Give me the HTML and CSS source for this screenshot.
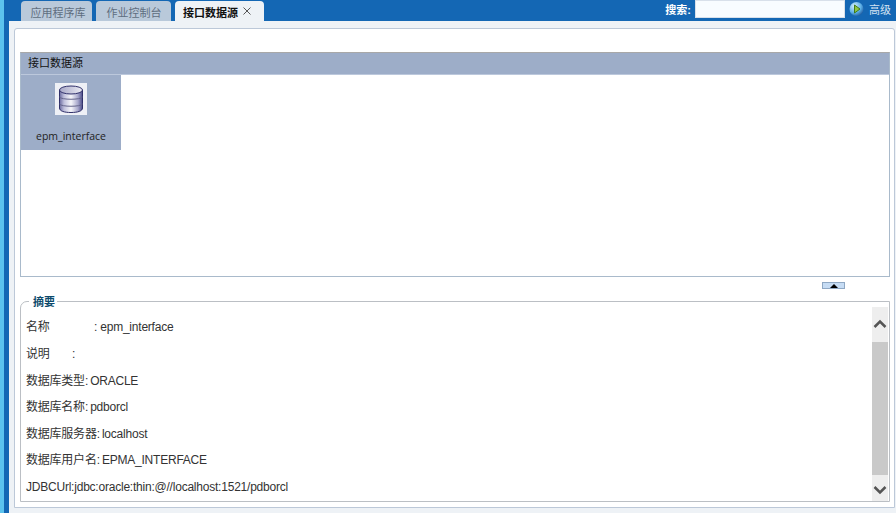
FILE: index.html
```html
<!DOCTYPE html>
<html lang="zh">
<head>
<meta charset="utf-8">
<title>接口数据源</title>
<link rel="stylesheet" href="styles.css">
</head>
<body>
<div class="app">
  <div class="edge-light"></div>
  <div class="edge-blue"></div>
  <div class="main">
    <header class="topbar">
      <nav class="tabs">
        <div class="tab">应用程序库</div>
        <div class="tab second">作业控制台</div>
        <div class="tab active">接口数据源<svg class="close" width="8" height="8" viewBox="0 0 8 8"><path d="M0.500 0.500 L7.500 7.500 M7.500 0.500 L0.500 7.500" fill="none" stroke="#444" stroke-width="0.900"/></svg></div>
      </nav>
      <div class="search">
        <span class="search-label">搜索:</span>
        <input class="search-input" type="text">
        <svg class="go" width="16" height="16" viewBox="0 0 16 16">
          <defs>
            <radialGradient id="ball" cx="35%" cy="30%" r="80%">
              <stop offset="0" stop-color="#d5f0fc"/>
              <stop offset="0.6" stop-color="#5aaee6"/>
              <stop offset="1" stop-color="#174f96"/>
            </radialGradient>
          </defs>
          <circle cx="7.5" cy="8" r="7" fill="url(#ball)"/>
          <path d="M5.500 4 L11 8 L5.500 12 Z" fill="#8fc540" stroke="#3f7a1c" stroke-width="1"/>
        </svg>
        <span class="advanced">高级</span>
      </div>
    </header>
    <section class="content">
      <div class="panel">
        <div class="grid-box">
          <div class="grid-title">接口数据源</div>
          <div class="grid-body">
            <div class="item">
              <div class="item-icon">
                <svg width="26" height="30" viewBox="0 0 26 30">
                  <defs>
                    <linearGradient id="cyl" x1="0" x2="1" y1="0" y2="0">
                      <stop offset="0" stop-color="#6a6aa0"/>
                      <stop offset="0.2" stop-color="#c0c0dc"/>
                      <stop offset="0.5" stop-color="#f6f6fa"/>
                      <stop offset="0.8" stop-color="#a8a8cc"/>
                      <stop offset="1" stop-color="#4a4a88"/>
                    </linearGradient>
                    <linearGradient id="cap" x1="0" x2="1" y1="0" y2="0">
                      <stop offset="0" stop-color="#a8a8c8"/>
                      <stop offset="1" stop-color="#ececf4"/>
                    </linearGradient>
                  </defs>
                  <path d="M1.500 6 V24 C1.500 27 6 28.500 13 28.500 C20 28.500 24.500 27 24.500 24 V6 Z" fill="url(#cyl)" stroke="#30306a"/>
                  <ellipse cx="13" cy="6" rx="11.500" ry="4" fill="url(#cap)" stroke="#30306a"/>
                  <path d="M1.500 13 C3 16 23 16 24.500 13 M1.500 20 C3 23 23 23 24.500 20" fill="none" stroke="#66668c"/>
                </svg>
              </div>
              <div class="item-label">epm_interface</div>
            </div>
          </div>
        </div>
        <div class="splitter">
          <button class="split-btn" type="button"><span class="split-arrow"></span></button>
        </div>
        <fieldset class="summary">
          <legend class="summary-legend">摘要</legend>
          <div class="summary-scroll">
            <div class="rows">
              <div class="row wide"><span class="k1">名称</span>: epm_interface</div>
              <div class="row"><span class="k2">说明</span>:</div>
              <div class="row">数据库类型: ORACLE</div>
              <div class="row">数据库名称: pdborcl</div>
              <div class="row">数据库服务器: localhost</div>
              <div class="row">数据库用户名: EPMA_INTERFACE</div>
              <div class="row">JDBCUrl:jdbc:oracle:thin:@//localhost:1521/pdborcl</div>
            </div>
            <div class="scrollbar">
              <svg class="chev" width="16" height="12" viewBox="0 0 16 12"><path d="M2.500 9 L8 3.500 L13.500 9" fill="none" stroke="#555" stroke-width="2.500"/></svg>
              <div class="thumb"></div>
              <svg class="chev" width="16" height="12" viewBox="0 0 16 12"><path d="M2.500 3 L8 8.500 L13.500 3" fill="none" stroke="#555" stroke-width="2.500"/></svg>
            </div>
          </div>
        </fieldset>
      </div>
    </section>
  </div>
</div>
</body>
</html>
```
FILE: styles.css
```css
* { box-sizing: border-box; }
html, body { margin: 0; padding: 0; height: 100%; overflow: hidden; }
body { font-family: "Liberation Sans", "Noto Sans CJK SC", sans-serif; font-size: 12px; color: #333; background: #eef2f6; }
.app { display: flex; width: 896px; height: 513px; }
.edge-light { width: 4px; background: #5cc3ee; }
.edge-blue { width: 5px; background: #1467b4; }
.main { flex: 1; display: flex; flex-direction: column; min-width: 0; }
.topbar { height: 21px; background: #1467b4; display: flex; justify-content: space-between; }
.tabs { display: flex; gap: 4px; padding: 1px 0 0 12px; }
.tab { width: 71px; height: 20px; background: #b9c9da; color: #5f6e80; border-radius: 4px 4px 0 0; text-align: center; line-height: 24px; font-size: 11px; padding-left: 3px; }
.tab.second { width: 75px; padding-left: 1px; }
.tab.active { width: 89px; background: #eef2f6; color: #111; text-align: left; padding-left: 8px; font-weight: bold; position: relative; }
.close { position: absolute; left: 68px; top: 6px; }
.search { display: flex; align-items: center; height: 18px; }
.search-label { color: #fff; font-size: 11px; font-weight: bold; margin-right: 4px; }
.search-input { width: 150px; height: 18px; border: 1px solid #d8e0ea; background: #f8fcff; padding: 0; margin-right: 4px; }
.go { margin-right: 4px; }
.advanced { color: #d5e3f2; font-size: 11px; margin-right: 5px; }
.content { flex: 1; padding: 7px 1px 5px 5px; min-height: 0; }
.panel { height: 100%; background: #fff; border: 1px solid #bcc8d8; border-radius: 3px 3px 0 0; padding: 23px 4px 0 5px; display: flex; flex-direction: column; }
.grid-box { height: 225px; border: 1px solid #a9bacb; border-top: 1px solid #a8a8a8; }
.grid-title { height: 21px; background: #9dadc8; color: #111; font-size: 11px; line-height: 20px; padding-left: 7px; }
.grid-body { border-top: 1px solid #bcc8dc; }
.item { width: 100px; height: 75px; background: #9dadc8; padding-top: 8px; display: flex; flex-direction: column; align-items: center; }
.item-icon { width: 32px; height: 32px; background: #eef0f6; display: flex; align-items: center; justify-content: center; }
.item-label { margin-top: 15px; font-size: 10.500px; color: #222; line-height: 12px; font-family: "Open Sans", "Liberation Sans", sans-serif; }
.splitter { height: 24px; display: flex; justify-content: flex-end; padding: 5px 45px 0 0; }
.split-btn { width: 23px; height: 7px; padding: 0; border: 1px solid #8fa8c4; background: #c6dcf4; display: flex; justify-content: center; align-items: center; }
.split-arrow { width: 0; height: 0; border-left: 4px solid transparent; border-right: 4px solid transparent; border-bottom: 4px solid #000; }
.summary { margin: 0; padding: 0 1px 1px 5px; height: 201px; border: 1px solid #bbbfc4; border-radius: 7px 0 0 0; min-width: 0; position: relative; }
.summary-legend { position: absolute; top: -7px; left: 8px; padding: 0 2px 0 4px; background: #fff; color: #0d4a6c; font-size: 11px; font-weight: bold; line-height: 15px; }
.summary-scroll { display: flex; height: 100%; padding-top: 5px; }
.rows { flex: 1; padding-top: 7.450px; color: #333; font-size: 12px; letter-spacing: -0.220px; word-spacing: -1px; }
.row { height: 26.600px; line-height: 26px; white-space: nowrap; }
.row.wide { word-spacing: 0; }
.k1 { display: inline-block; width: 68px; }
.k2 { display: inline-block; width: 46px; }
.scrollbar { width: 16px; background: #eee; display: flex; flex-direction: column; align-items: center; }
.chev { flex: none; margin: 11px 0 12px; }
.chev:last-child { margin: 9px 0 0; }
.thumb { width: 16px; height: 133px; background: #c9c9c9; flex: none; }
```
